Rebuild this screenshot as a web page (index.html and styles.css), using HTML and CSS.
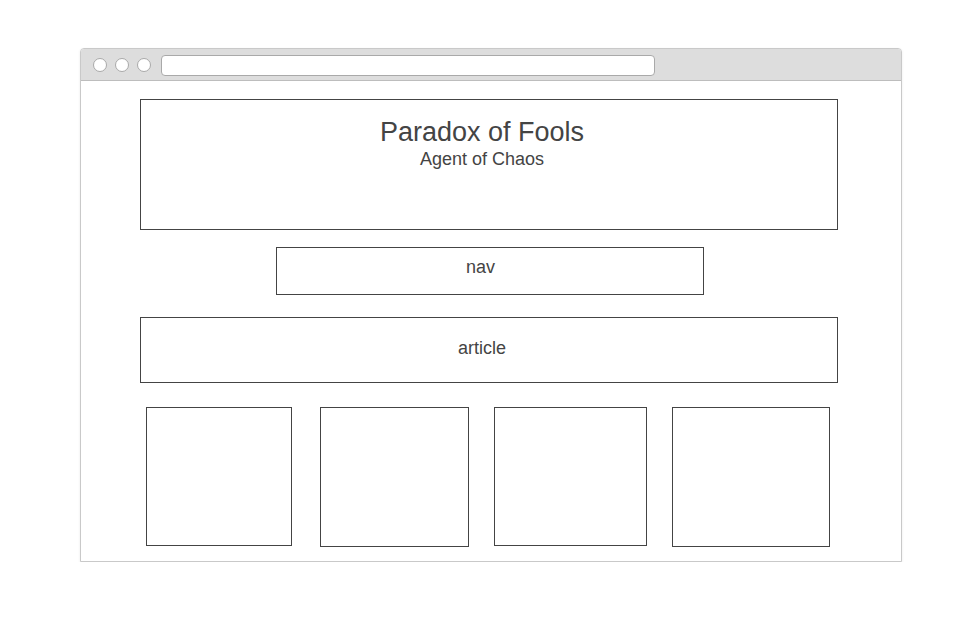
FILE: index.html
```html
<!DOCTYPE html>
<html lang="en">
<head>
<meta charset="utf-8">
<title>Paradox of Fools</title>
<link rel="stylesheet" href="styles.css">
</head>
<body>
<div class="window">
  <div class="titlebar">
    <span class="dot"></span>
    <span class="dot"></span>
    <span class="dot"></span>
    <span class="address"></span>
  </div>
  <div class="content">
    <header class="site-header">
      <h1 class="title">Paradox of Fools</h1>
      <p class="subtitle">Agent of Chaos</p>
    </header>
    <nav class="site-nav">nav</nav>
    <article class="site-article">article</article>
    <div class="cards">
      <div class="card card-a"></div>
      <div class="card card-b"></div>
      <div class="card card-c"></div>
      <div class="card card-d"></div>
    </div>
  </div>
</div>
</body>
</html>
```
FILE: styles.css
```css
* { box-sizing: border-box; }
html, body { margin: 0; padding: 0; background: #ffffff; }
body {
  font-family: "Liberation Sans", Arial, sans-serif;
  color: #444444;
  padding-top: 48px;
  padding-left: 80px;
}
.window {
  width: 822px;
  height: 514px;
  border: 1px solid #c9c9c9;
  border-radius: 4px 4px 0 0;
  box-shadow: 0 1px 3px rgba(0,0,0,0.08);
  background: #ffffff;
  overflow: hidden;
}
.titlebar {
  height: 32px;
  background: #dddddd;
  border-bottom: 1px solid #bdbdbd;
  display: flex;
  align-items: flex-start;
  padding: 9px 0 0 12px;
}
.dot {
  width: 14px;
  height: 14px;
  border-radius: 50%;
  background: #ffffff;
  border: 1px solid #a9a9a9;
  margin-right: 8px;
}
.address {
  margin-top: -3px;
  margin-left: 2px;
  width: 494px;
  height: 21px;
  background: #ffffff;
  border: 1px solid #a9a9a9;
  border-radius: 4px;
}
.content {
  padding: 18px 0 0 0;
  display: flex;
  flex-direction: column;
}
.site-header {
  margin-left: 59px;
  width: 698px;
  height: 131px;
  border: 1px solid #444444;
  text-align: center;
  padding: 17px 14px 0 0;
}
.title {
  margin: 0;
  font-size: 27px;
  line-height: 31px;
  font-weight: normal;
}
.subtitle {
  margin: 1px 0 0 0;
  font-size: 18px;
  line-height: 21px;
}
.site-nav {
  margin: 17px 0 0 195px;
  width: 428px;
  height: 48px;
  border: 1px solid #444444;
  text-align: center;
  font-size: 18px;
  line-height: 22px;
  padding: 8px 19px 0 0;
}
.site-article {
  margin: 22px 0 0 59px;
  width: 698px;
  height: 66px;
  border: 1px solid #444444;
  text-align: center;
  font-size: 18px;
  line-height: 22px;
  padding: 19px 14px 0 0;
}
.cards {
  margin: 24px 0 0 65px;
  display: flex;
  align-items: flex-start;
}
.card {
  border: 1px solid #444444;
  background: #ffffff;
}
.card-a { width: 146px; height: 139px; }
.card-b { width: 149px; height: 140px; margin-left: 28px; }
.card-c { width: 153px; height: 139px; margin-left: 25px; }
.card-d { width: 158px; height: 140px; margin-left: 25px; }
```
